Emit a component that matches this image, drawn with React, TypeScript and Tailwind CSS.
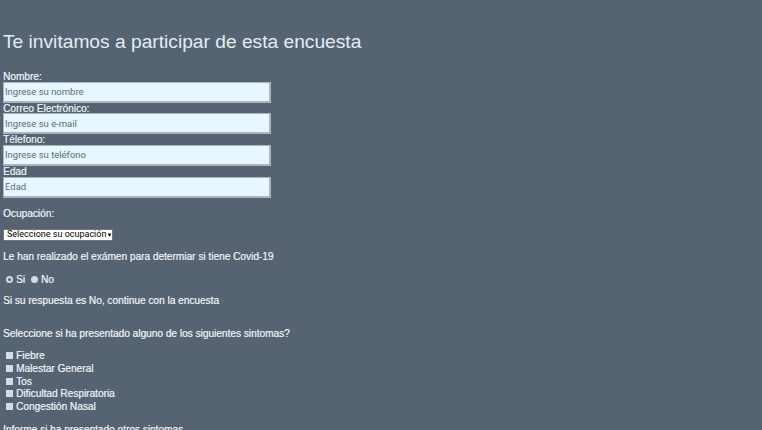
import React from 'react';

/**
 * Survey form fields
 */
const fields = [
  { label: 'Nombre:', placeholder: 'Ingrese su nombre' },
  { label: 'Correo Electrónico:', placeholder: 'Ingrese su e-mail' },
  { label: 'Télefono:', placeholder: 'Ingrese su teléfono' },
  { label: 'Edad', placeholder: 'Edad' },
];

const symptoms = ['Fiebre', 'Malestar General', 'Tos', 'Dificultad Respiratoria', 'Congestión Nasal'];

// condensed look for form controls
const narrow = "font-['Roboto','Liberation_Sans',sans-serif]";

export default function App() {
  return (
    <div className="min-h-screen bg-[#566372] px-[3px] pt-[30px] font-['Liberation_Sans',Arial,sans-serif] text-[10.1px] leading-[11px] text-[#eef3f8] [text-shadow:0.4px_0_0_rgba(238,243,248,0.55)]">
      {/* Title */}
      <h1 className="text-[19.2px] leading-[23px] text-[#e3ecf5] [text-shadow:none]">
        Te invitamos a participar de esta encuesta
      </h1>

      {/* Text fields */}
      <div className="mt-[18px] flex flex-col">
        {fields.map((f) => (
          <div key={f.label} className="flex flex-col">
            <label className="h-[10.67px] leading-[11px]">{f.label}</label>
            <input
              placeholder={f.placeholder}
              className={`h-[21px] w-[268px] border border-b-2 border-r-2 border-[#a9b4bf] bg-[#e8f6ff] px-[1px] text-[9.5px] text-[#333] outline-none placeholder:text-[#5c6b7a] [text-shadow:none] ${narrow}`}
            />
          </div>
        ))}
      </div>

      {/* Occupation */}
      <p className="mt-[10px]">Ocupación:</p>
      <div className="mt-[10px] flex">
        <div
          className={`flex h-[12px] w-[110px] items-center justify-between whitespace-nowrap border border-[#767676] bg-white pl-[3px] pr-[5px] text-[9px] leading-none text-black [text-shadow:none] ${narrow}`}
        >
          <span>Seleccione su ocupación</span>
          <span className="text-[6px]">▼</span>
        </div>
      </div>

      <p className="mt-[10px]">Le han realizado el exámen para determiar si tiene Covid-19</p>

      {/* Radios */}
      <div className="mt-[12px] flex h-[12px] items-center pl-[3px]">
        <span className="flex h-[7px] w-[7px] items-center justify-center rounded-full bg-[#d6dbe0]">
          <span className="h-[3px] w-[3px] rounded-full bg-[#566372]" />
        </span>
        <span className="ml-[3px]">Si</span>
        <span className="ml-[6px] h-[7px] w-[7px] rounded-full bg-[#d6dbe0]" />
        <span className="ml-[3px]">No</span>
      </div>

      <p className="mt-[9px]">Si su respuesta es No, continue con la encuesta</p>

      <p className="mt-[22px]">Seleccione si ha presentado alguno de los siguientes sintomas?</p>

      {/* Symptoms */}
      <div className="mt-[11px] flex flex-col">
        {symptoms.map((s) => (
          <div key={s} className="flex h-[12.6px] items-center pl-[3px]">
            <span className="h-[7px] w-[7px] bg-[#d6dbe0]" />
            <span className="ml-[3px]">{s}</span>
          </div>
        ))}
      </div>

      <p className="mt-[11px]">Informe si ha presentado otros sintomas</p>
    </div>
  );
}
